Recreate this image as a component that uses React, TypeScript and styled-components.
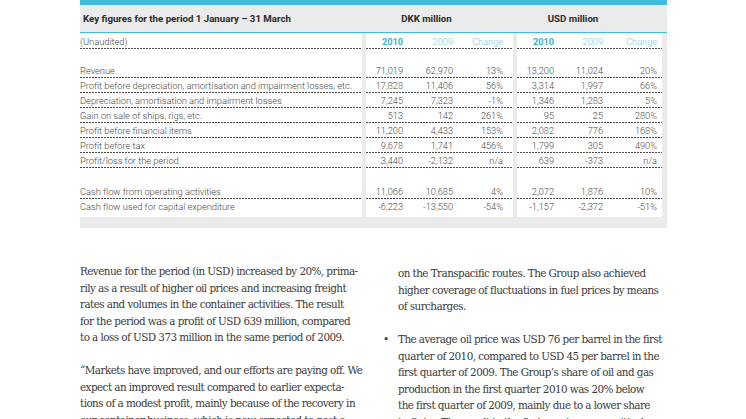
import React from "react";
import styled, { createGlobalStyle } from "styled-components";

const Global = createGlobalStyle`
  html, body { margin: 0; padding: 0; background: #fff; overflow: hidden; }
  #root { width: 746px; height: 419px; overflow: hidden; }
`;

const CYAN = "#41bbd7";
const CYAN_LIGHT = "#7ccbe0";
const GRAY = "#ebebeb";
const COLS = "282px 4px 147px 4px 145px 5px";

const Page = styled.div`
  width: 587px;
  padding-left: 80px;
  font-family: Roboto, "Liberation Sans", sans-serif;
`;

const TopBar = styled.div`
  height: 5px;
  background: ${CYAN};
`;

const Header = styled.div`
  display: grid;
  grid-template-columns: 286px 147px 154px;
  height: 27px;
  align-items: center;
  background: ${GRAY};
  border-bottom: 1px solid ${CYAN};
  font-weight: 700;
  font-size: 9.7px;
  color: #2a2a2a;
`;

const Title = styled.div`
  padding-left: 3px;
`;

const GroupTitle = styled.div<{ $pr: number }>`
  text-align: center;
  padding-right: ${(p) => p.$pr}px;
`;

const Row = styled.div<{ $h: number }>`
  display: grid;
  grid-template-columns: ${COLS};
  height: ${(p) => p.$h}px;
`;

const dashed = `
  background-image: repeating-linear-gradient(90deg, #4a4a4a 0 2px, transparent 2px 3px);
  background-size: 100% 1px;
  background-position: left bottom;
  background-repeat: no-repeat;
`;

const Label = styled.div<{ $line?: boolean }>`
  font-size: 9.4px;
  font-weight: 300;
  color: #4a4a4a;
  display: flex;
  align-items: center;
  white-space: nowrap;
  letter-spacing: -0.05px;
  ${(p) => (p.$line ? dashed : "")}
`;

const Sep = styled.div`
  background: ${GRAY};
`;

const Group = styled.div<{ $line?: boolean; $cols: string }>`
  display: grid;
  grid-template-columns: ${(p) => p.$cols};
  ${(p) => (p.$line ? dashed : "")}
`;

const Num = styled.div<{ $pr: number; $tone?: "bold" | "light" }>`
  display: flex;
  align-items: center;
  justify-content: flex-end;
  padding-right: ${(p) => p.$pr}px;
  font-size: 9.2px;
  white-space: nowrap;
  font-weight: ${(p) => (p.$tone === "bold" ? 700 : 300)};
  color: ${(p) =>
    p.$tone === "bold" ? "#36b2d0" : p.$tone === "light" ? CYAN_LIGHT : "#4a4a4a"};
`;

const BottomBand = styled.div`
  height: 11px;
  background: ${GRAY};
`;

const DKK_COLS = "47px 50px 50px";
const USD_COLS = "47px 49px 49px";
const DKK_PR = [10, 10, 10];
const USD_PR = [10, 10, 5];

type Line = { label: string; dkk: string[]; usd: string[] };

const main: Line[] = [
  { label: "Revenue", dkk: ["71,019", "62,970", "13%"], usd: ["13,200", "11,024", "20%"] },
  {
    label: "Profit before depreciation, amortisation and impairment losses, etc.",
    dkk: ["17,828", "11,406", "56%"],
    usd: ["3,314", "1,997", "66%"],
  },
  {
    label: "Depreciation, amortisation and impairment losses",
    dkk: ["7,245", "7,323", "-1%"],
    usd: ["1,346", "1,283", "5%"],
  },
  { label: "Gain on sale of ships, rigs, etc.", dkk: ["513", "142", "261%"], usd: ["95", "25", "280%"] },
  { label: "Profit before financial items", dkk: ["11,200", "4,433", "153%"], usd: ["2,082", "776", "168%"] },
  { label: "Profit before tax", dkk: ["9,678", "1,741", "456%"], usd: ["1,799", "305", "490%"] },
  { label: "Profit/loss for the period", dkk: ["3,440", "-2,132", "n/a"], usd: ["639", "-373", "n/a"] },
];

const cash: Line[] = [
  {
    label: "Cash flow from operating activities",
    dkk: ["11,066", "10,685", "4%"],
    usd: ["2,072", "1,876", "10%"],
  },
  {
    label: "Cash flow used for capital expenditure",
    dkk: ["-6,223", "-13,550", "-54%"],
    usd: ["-1,157", "-2,372", "-51%"],
  },
];

const DataRow = ({ line, border }: { line: Line; border: boolean }) => (
  <Row $h={15}>
    <Label $line={border}>{line.label}</Label>
    <Sep />
    <Group $cols={DKK_COLS} $line={border}>
      {line.dkk.map((v, i) => (
        <Num key={i} $pr={DKK_PR[i]}>
          {v}
        </Num>
      ))}
    </Group>
    <Sep />
    <Group $cols={USD_COLS} $line={border}>
      {line.usd.map((v, i) => (
        <Num key={i} $pr={USD_PR[i]}>
          {v}
        </Num>
      ))}
    </Group>
    <Sep />
  </Row>
);

const Spacer = ({ h }: { h: number }) => (
  <Row $h={h}>
    <div />
    <Sep />
    <div />
    <Sep />
    <div />
    <Sep />
  </Row>
);

const yearHeads = ["2010", "2009", "Change"];

const Body = styled.div`
  display: grid;
  grid-template-columns: 303px 1fr;
  margin-top: 35px;
  font-family: "DejaVu Serif", "Liberation Serif", serif;
  font-size: 10.4px;
  line-height: 16.5px;
  color: #3a3a3a;
  letter-spacing: -0.55px;
`;

const Col = styled.div<{ $top?: number }>`
  padding-top: ${(p) => p.$top ?? 0}px;
  white-space: nowrap;
`;

const Para = styled.p<{ $indent?: number }>`
  margin: 0 0 16.5px 0;
  padding-left: ${(p) => p.$indent ?? 0}px;
`;

const Bullet = styled.div`
  display: flex;
`;

const Dot = styled.span`
  width: 15px;
  flex: none;
`;

export default function App() {
  return (
    <>
      <Global />
      <Page>
        <TopBar />
        <Header>
          <Title>Key figures for the period 1 January – 31 March</Title>
          <GroupTitle $pr={26}>DKK million</GroupTitle>
          <GroupTitle $pr={34}>USD million</GroupTitle>
        </Header>
        <Row $h={16}>
          <Label $line>(Unaudited)</Label>
          <Sep />
          <Group $cols={DKK_COLS} $line>
            {yearHeads.map((v, i) => (
              <Num key={v} $pr={DKK_PR[i]} $tone={i === 0 ? "bold" : "light"}>
                {v}
              </Num>
            ))}
          </Group>
          <Sep />
          <Group $cols={USD_COLS} $line>
            {yearHeads.map((v, i) => (
              <Num key={v} $pr={USD_PR[i]} $tone={i === 0 ? "bold" : "light"}>
                {v}
              </Num>
            ))}
          </Group>
          <Sep />
        </Row>
        <Spacer h={14} />
        {main.map((l) => (
          <DataRow key={l.label} line={l} border />
        ))}
        <Spacer h={16} />
        {cash.map((l, i) => (
          <DataRow key={l.label} line={l} border={i === 0} />
        ))}
        <Spacer h={3} />
        <BottomBand />

        <Body>
          <Col>
            <Para>
              Revenue for the period (in USD) increased by 20%, prima-
              <br />
              rily as a result of higher oil prices and increasing freight
              <br />
              rates and volumes in the container activities. The result
              <br />
              for the period was a profit of USD 639 million, compared
              <br />
              to a loss of USD 373 million in the same period of 2009.
            </Para>
            <Para>
              “Markets have improved, and our efforts are paying off. We
              <br />
              expect an improved result compared to earlier expecta-
              <br />
              tions of a modest profit, mainly because of the recovery in
              <br />
              our container business, which is now expected to post a
            </Para>
          </Col>
          <Col $top={2}>
            <Para $indent={15}>
              on the Transpacific routes. The Group also achieved
              <br />
              higher coverage of fluctuations in fuel prices by means
              <br />
              of surcharges.
            </Para>
            <Bullet>
              <Dot>•</Dot>
              <Para>
                The average oil price was USD 76 per barrel in the first
                <br />
                quarter of 2010, compared to USD 45 per barrel in the
                <br />
                first quarter of 2009. The Group’s share of oil and gas
                <br />
                production in the first quarter 2010 was 20% below
                <br />
                the first quarter of 2009, mainly due to a lower share
                <br />
                in Qatar. The result in the first quarter was positively
              </Para>
            </Bullet>
          </Col>
        </Body>
      </Page>
    </>
  );
}
